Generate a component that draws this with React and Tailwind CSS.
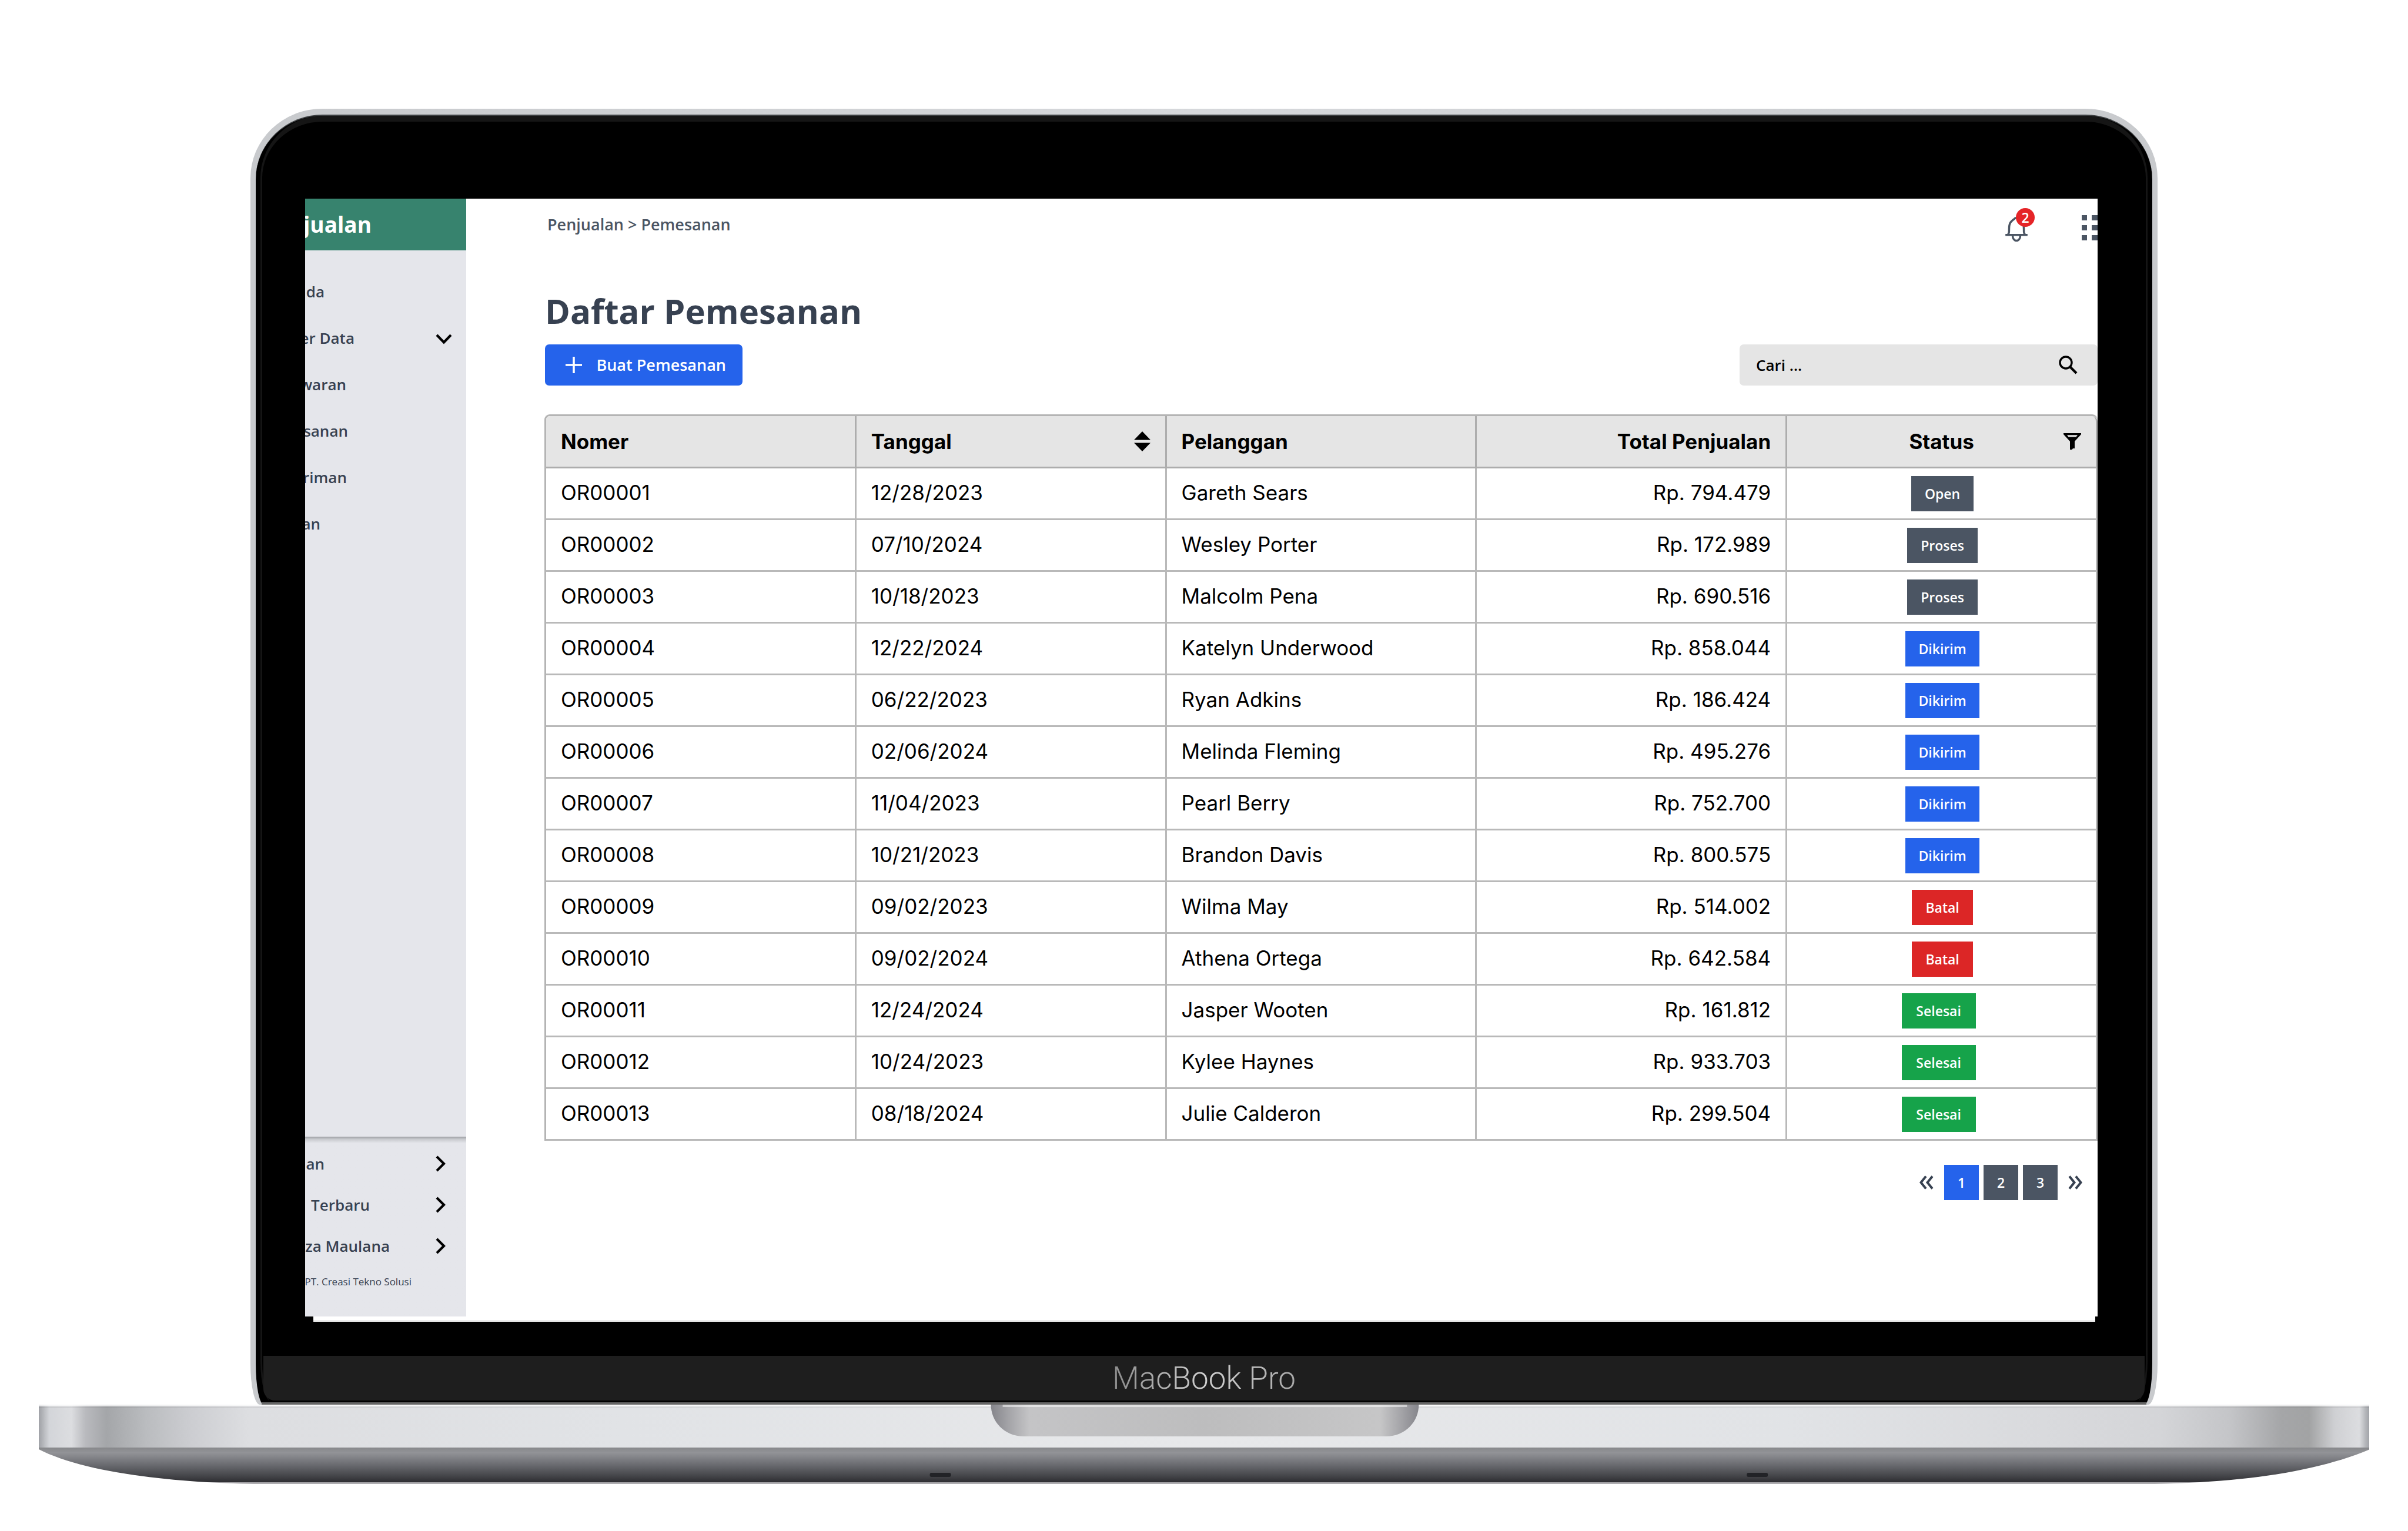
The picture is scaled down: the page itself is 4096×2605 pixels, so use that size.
import React from "react";

const mainMenu = [
  { label: "da", width: "w-[33px]" },
  { label: "er Data", width: "w-[84px]", open: true },
  { label: "waran", width: "w-[70px]" },
  { label: "sanan", width: "w-[73px]" },
  { label: "riman", width: "w-[71px]" },
  { label: "an", width: "w-[26px]" },
];

const footerMenu = [
  { label: "an", width: "w-[33px]" },
  { label: "Terbaru", width: "w-[110px]" },
  { label: "za Maulana", width: "w-[144px]" },
];

const orders = [
  ["OR00001", "12/28/2023", "Gareth Sears", "Rp. 794.479", "Open"],
  ["OR00002", "07/10/2024", "Wesley Porter", "Rp. 172.989", "Proses"],
  ["OR00003", "10/18/2023", "Malcolm Pena", "Rp. 690.516", "Proses"],
  ["OR00004", "12/22/2024", "Katelyn Underwood", "Rp. 858.044", "Dikirim"],
  ["OR00005", "06/22/2023", "Ryan Adkins", "Rp. 186.424", "Dikirim"],
  ["OR00006", "02/06/2024", "Melinda Fleming", "Rp. 495.276", "Dikirim"],
  ["OR00007", "11/04/2023", "Pearl Berry", "Rp. 752.700", "Dikirim"],
  ["OR00008", "10/21/2023", "Brandon Davis", "Rp. 800.575", "Dikirim"],
  ["OR00009", "09/02/2023", "Wilma May", "Rp. 514.002", "Batal"],
  ["OR00010", "09/02/2024", "Athena Ortega", "Rp. 642.584", "Batal"],
  ["OR00011", "12/24/2024", "Jasper Wooten", "Rp. 161.812", "Selesai"],
  ["OR00012", "10/24/2023", "Kylee Haynes", "Rp. 933.703", "Selesai"],
  ["OR00013", "08/18/2024", "Julie Calderon", "Rp. 299.504", "Selesai"],
];

const badgeStyle = {
  Open: "bg-[#4b5563] w-[106px]",
  Proses: "bg-[#4b5563] w-[120px]",
  Dikirim: "bg-[#2563eb] w-[126px]",
  Batal: "bg-[#dc2626] w-[104px]",
  Selesai: "bg-[#16a34a] w-[126px] mr-[13px]",
};

function Chevron({ className, d }) {
  return (
    <svg viewBox="0 0 32 32" className={className} fill="none" stroke="#000" strokeWidth="4.2" aria-hidden="true">
      <path d={d} />
    </svg>
  );
}

function Bell() {
  return (
    <svg viewBox="0 0 54 66" className="h-[46px] w-[38px]" fill="none" stroke="#4b5563" aria-hidden="true">
      <path d="M0 48.500H54" strokeWidth="5" />
      <path d="M6 48C9 44 9 42 9 34C9 18 14 15 22 9C24 6 30 6 32 9C40 15 45 18 45 34C45 42 45 44 48 48" strokeWidth="5" />
      <path d="M17.500 49C17.500 67 36.500 67 36.500 49" strokeWidth="5" />
    </svg>
  );
}

function Sidebar() {
  return (
    <aside className="flex w-[274px] shrink-0 flex-col bg-[#e5e6eb] font-semibold text-[#374151]">
      <header className="flex h-[88px] items-center bg-[#37836e]">
        <span className="flex w-[113px] justify-end overflow-hidden text-[37px] leading-[56px] font-bold text-white">jualan</span>
      </header>
      <nav className="flex flex-col pt-[31px] text-[26px]">
        {mainMenu.map((m) => (
          <a key={m.label} href="#menu" className="flex h-[79px] items-center justify-between pr-[22px]">
            <span className={`flex justify-end overflow-hidden whitespace-nowrap ${m.width}`}>{m.label}</span>
            {m.open && <Chevron className="h-[32px] w-[32px]" d="M4 10L16 22.500L28 10" />}
          </a>
        ))}
      </nav>
      <div className="mt-auto border-t-3 border-[#abadb1] bg-linear-to-b from-[#c2c4c8] to-[#e5e6eb] to-[8px] pt-[8px] pb-[33px]">
        <nav className="flex flex-col text-[26px]">
          {footerMenu.map((m) => (
            <a key={m.label} href="#menu" className="flex h-[70px] items-center justify-between pr-[28px]">
              <span className={`flex justify-end overflow-hidden whitespace-nowrap ${m.width}`}>{m.label}</span>
              <Chevron className="h-[32px] w-[32px]" d="M10 4L22 16L10 28" />
            </a>
          ))}
        </nav>
        <p className="flex h-[52px] w-[181px] items-center justify-end overflow-hidden whitespace-nowrap text-[17px] font-normal text-[#374151]">
          PT. Creasi Tekno Solusi
        </p>
      </div>
    </aside>
  );
}

function TopBar() {
  return (
    <div className="flex h-[88px] items-center justify-between pl-[138px] text-[#4b5563]">
      <div className="text-[27px] font-semibold">Penjualan &gt; Pemesanan</div>
      <div className="flex items-center overflow-hidden">
        <button type="button" aria-label="Notifikasi" className="relative mr-[92px] flex h-[88px] w-[38px] items-start pt-[28px]">
          <Bell />
          <span className="absolute top-[16px] left-[18px] flex h-[32px] w-[32px] items-center justify-center rounded-full bg-[#e52427] text-[23px] font-semibold text-white">
            2
          </span>
        </button>
        <button type="button" aria-label="Aplikasi" className="flex w-[27px] overflow-hidden pt-[12px]">
          <svg viewBox="0 0 27 44" className="h-[44px] w-[27px]" fill="#4b5563" aria-hidden="true">
            <path d="M0 0h9v9H0zM17 0h10v9H17zM0 17h9v9H0zM17 17h10v9H17zM0 34h9v9H0zM17 34h10v9H17z" />
          </svg>
        </button>
      </div>
    </div>
  );
}

function SortIcon() {
  return (
    <svg viewBox="0 0 28 34" className="h-[34px] w-[28px]" aria-hidden="true">
      <path d="M14 0L28 14.500H0zM14 34L28 19.500H0z" />
    </svg>
  );
}

function FilterIcon() {
  return (
    <svg viewBox="0 0 30 30" className="h-[30px] w-[30px]" aria-hidden="true">
      <path fillRule="evenodd" d="M0 1H30V3L19 15V27H16L14.500 29H11V15L0 3zM6 4.200L8.500 7.500H21.500L24 4.200z" />
    </svg>
  );
}

const cell = "h-[88px] border-r-3 border-b-3 border-[#b9b9b9] px-[25px] pb-[3px] font-normal";
const head = "h-[89px] border-r-3 border-b-3 border-[#adadad] bg-[#e5e5e5] px-[25px] font-bold";

function OrdersTable() {
  return (
    <table className="mt-[49px] w-full table-fixed border-separate border-spacing-0 rounded-t-[9px] border-t-3 border-l-3 border-[#b4b4b4] font-['Inter',sans-serif] text-[35px] leading-[44px] text-black">
      <thead>
        <tr>
          <th className={`${head} rounded-tl-[6px] text-left`}>Nomer</th>
          <th className={head}>
            <div className="flex items-center justify-between">
              Tanggal
              <SortIcon />
            </div>
          </th>
          <th className={`${head} text-left`}>Pelanggan</th>
          <th className={`${head} text-right`}>Total Penjualan</th>
          <th className={`${head} rounded-tr-[9px]`}>
            <div className="grid grid-cols-[1fr_auto_1fr] items-center">
              <span />
              Status
              <span className="justify-self-end">
                <FilterIcon />
              </span>
            </div>
          </th>
        </tr>
      </thead>
      <tbody>
        {orders.map(([no, date, name, total, status]) => (
          <tr key={no}>
            <td className={cell}>{no}</td>
            <td className={cell}>{date}</td>
            <td className={cell}>{name}</td>
            <td className={`${cell} text-right`}>{total}</td>
            <td className="h-[88px] border-r-3 border-b-3 border-[#b9b9b9] pl-[3px]">
              <div className="flex justify-center">
                <span
                  className={`flex h-[60px] items-center justify-center font-['Open_Sans',sans-serif] text-[23px] font-semibold text-white ${badgeStyle[status]}`}
                >
                  {status}
                </span>
              </div>
            </td>
          </tr>
        ))}
      </tbody>
    </table>
  );
}

function Pagination() {
  return (
    <nav aria-label="Halaman" className="mt-[41px] flex items-center justify-end pr-[26px] text-[23px] font-semibold text-white">
      <button type="button" aria-label="Sebelumnya" className="mr-[18px]">
        <svg viewBox="0 0 24 24" className="h-[24px] w-[24px]" fill="none" stroke="#374151" strokeWidth="4" aria-hidden="true">
          <path d="M11 1.500L2.500 12L11 22.500M22 1.500L13.500 12L22 22.500" />
        </svg>
      </button>
      <div className="flex gap-[8px]">
        <button type="button" className="h-[60px] w-[59px] bg-[#2563eb]">1</button>
        <button type="button" className="h-[60px] w-[59px] bg-[#4b5563]">2</button>
        <button type="button" className="h-[60px] w-[59px] bg-[#4b5563]">3</button>
      </div>
      <button type="button" aria-label="Berikutnya" className="ml-[18px]">
        <svg viewBox="0 0 24 24" className="h-[24px] w-[24px]" fill="none" stroke="#374151" strokeWidth="4" aria-hidden="true">
          <path d="M2 1.500L10.500 12L2 22.500M13 1.500L21.500 12L13 22.500" />
        </svg>
      </button>
    </nav>
  );
}

function Screen() {
  return (
    <div className="flex overflow-hidden bg-white">
      <Sidebar />
      <main className="min-w-0 flex-1 pb-[198px]">
        <TopBar />
        <div className="pl-[133px]">
          <h1 className="mt-[59px] pl-[1px] text-[58px] leading-[88px] font-bold text-[#374151]">Daftar Pemesanan</h1>
          <div className="mt-[13px] flex justify-between pl-[1px]">
            <button
              type="button"
              className="flex h-[70px] w-[336px] items-center justify-between rounded-[7px] bg-[#2563eb] pr-[28px] pl-[34px] text-[27px] font-semibold text-white"
            >
              <svg viewBox="0 0 30 30" className="h-[30px] w-[30px]" stroke="#fff" strokeWidth="3.500" aria-hidden="true">
                <path d="M15 1V29M1 15H29" />
              </svg>
              Buat Pemesanan
            </button>
            <label className="flex h-[70px] w-[609px] items-center rounded-[7px] bg-[#e5e5e5] pr-[34px] pl-[28px]">
              <input
                type="text"
                aria-label="Cari"
                placeholder="Cari ..."
                className="min-w-0 flex-1 bg-transparent text-[26px] font-semibold text-black outline-none placeholder:text-black"
              />
              <svg viewBox="0 0 32 32" className="h-[32px] w-[32px]" fill="none" stroke="#000" aria-hidden="true">
                <circle cx="12" cy="12" r="10" strokeWidth="3.400" />
                <path d="M19 19L30 30" strokeWidth="4.200" />
              </svg>
            </label>
          </div>
          <OrdersTable />
          <Pagination />
        </div>
      </main>
    </div>
  );
}

function Lid() {
  return (
    <div className="w-[79.2%] rounded-[122px_122px_16px_16px/118px_118px_70px_70px] bg-linear-to-r from-[#c8cacd] via-[#d6d8db] to-[#c8cacd] px-[9px] pt-[10px]">
      <div className="rounded-[114px_114px_14px_14px/110px_110px_70px_70px] border-t-2 border-[#3c3f41] bg-black px-[8px]">
        <div className="rounded-[106px_106px_20px_20px/106px_106px_70px_70px] border-x-3 border-t-10 border-[#151515] bg-black pt-[131px]">
          <div className="pr-[82px] pl-[73px]">
            <Screen />
            <div className="mr-[4px] ml-[14px] h-[9px] border-b-3 border-[#ededed] bg-white" />
          </div>
          <div className="mx-[2px] mt-[58px] flex h-[76px] items-center justify-center rounded-b-[20px] bg-[#1e1e1e]">
            <span className="bg-linear-to-r from-[#8c8c8c] via-[#d0d0d0] to-[#a8a8a8] bg-clip-text font-['Roboto',sans-serif] text-[53px] leading-[76px] font-light text-transparent">
              MacBook Pro
            </span>
          </div>
          <div className="h-[3px] bg-black" />
        </div>
        <div className="mx-[2px] h-[4px] bg-[#666666]" />
      </div>
    </div>
  );
}

function Base() {
  return (
    <div className="relative w-[96.8%]">
      <svg viewBox="0 0 3966 136" preserveAspectRatio="none" className="block h-[136px] w-full" aria-hidden="true">
        <defs>
          <linearGradient id="side">
            <stop offset="0" stopColor="#9fa1a6" />
            <stop offset="0.0018" stopColor="#b4b6ba" />
            <stop offset="0.0045" stopColor="#d3d5d9" />
            <stop offset="0.014" stopColor="#dcdde0" />
            <stop offset="0.020" stopColor="#b9babe" />
            <stop offset="0.029" stopColor="#a4a6a9" />
            <stop offset="0.046" stopColor="#babcbf" />
            <stop offset="0.065" stopColor="#cccdd1" />
            <stop offset="0.090" stopColor="#dddee1" />
            <stop offset="0.25" stopColor="#e1e3e6" />
            <stop offset="0.5" stopColor="#e7e8ea" />
            <stop offset="0.75" stopColor="#e1e3e6" />
            <stop offset="0.86" stopColor="#d9dadd" />
            <stop offset="0.91" stopColor="#d4d5d8" />
            <stop offset="0.94" stopColor="#c4c5c8" />
            <stop offset="0.962" stopColor="#a5a6a8" />
            <stop offset="0.974" stopColor="#a2a3a4" />
            <stop offset="0.985" stopColor="#cfd0d3" />
            <stop offset="0.9955" stopColor="#dcdde0" />
            <stop offset="0.9982" stopColor="#b4b6ba" />
            <stop offset="1" stopColor="#9fa1a6" />
          </linearGradient>
          <linearGradient id="under" x1="0" y1="0" x2="0" y2="1">
            <stop offset="0" stopColor="#87888b" />
            <stop offset="0.14" stopColor="#929397" />
            <stop offset="0.45" stopColor="#6d6e73" />
            <stop offset="0.75" stopColor="#48494d" />
            <stop offset="0.95" stopColor="#2e2e32" />
            <stop offset="0.955" stopColor="#a09fa3" />
            <stop offset="1" stopColor="#b4b3b6" />
          </linearGradient>
          <linearGradient id="notch">
            <stop offset="0" stopColor="#85858b" />
            <stop offset="0.04" stopColor="#a3a3a7" />
            <stop offset="0.09" stopColor="#c4c4c6" />
            <stop offset="0.5" stopColor="#bdbdbe" />
            <stop offset="0.91" stopColor="#c6c6c7" />
            <stop offset="0.96" stopColor="#a3a3a7" />
            <stop offset="1" stopColor="#85858b" />
          </linearGradient>
        </defs>
        <path d="M0 0H3966V76H0z" fill="url(#side)" />
        <path d="M0 0H3966V3H0z" fill="#fff" fillOpacity="0.75" />
        <path d="M0 3H3966V6H0z" fill="#000" fillOpacity="0.05" />
        <path d="M0 73H3966V76C3880 112 3760 132 3600 135H366C206 132 70 112 0 76z" fill="url(#under)" />
        <path d="M1620 0H2348C2348 28 2326 54 2292 54H1676C1642 54 1620 28 1620 0z" fill="url(#notch)" />
        <path d="M1640 0H2328V4H1640z" fill="#fff" fillOpacity="0.5" />
        <rect x="1516" y="116" width="36" height="7" rx="3" fill="#222327" />
        <rect x="2906" y="116" width="36" height="7" rx="3" fill="#222327" />
      </svg>
    </div>
  );
}

export default function App() {
  return (
    <div className="flex min-h-screen w-full flex-col items-center bg-white pt-[185px] font-['Open_Sans',sans-serif]">
      <Lid />
      <Base />
    </div>
  );
}
